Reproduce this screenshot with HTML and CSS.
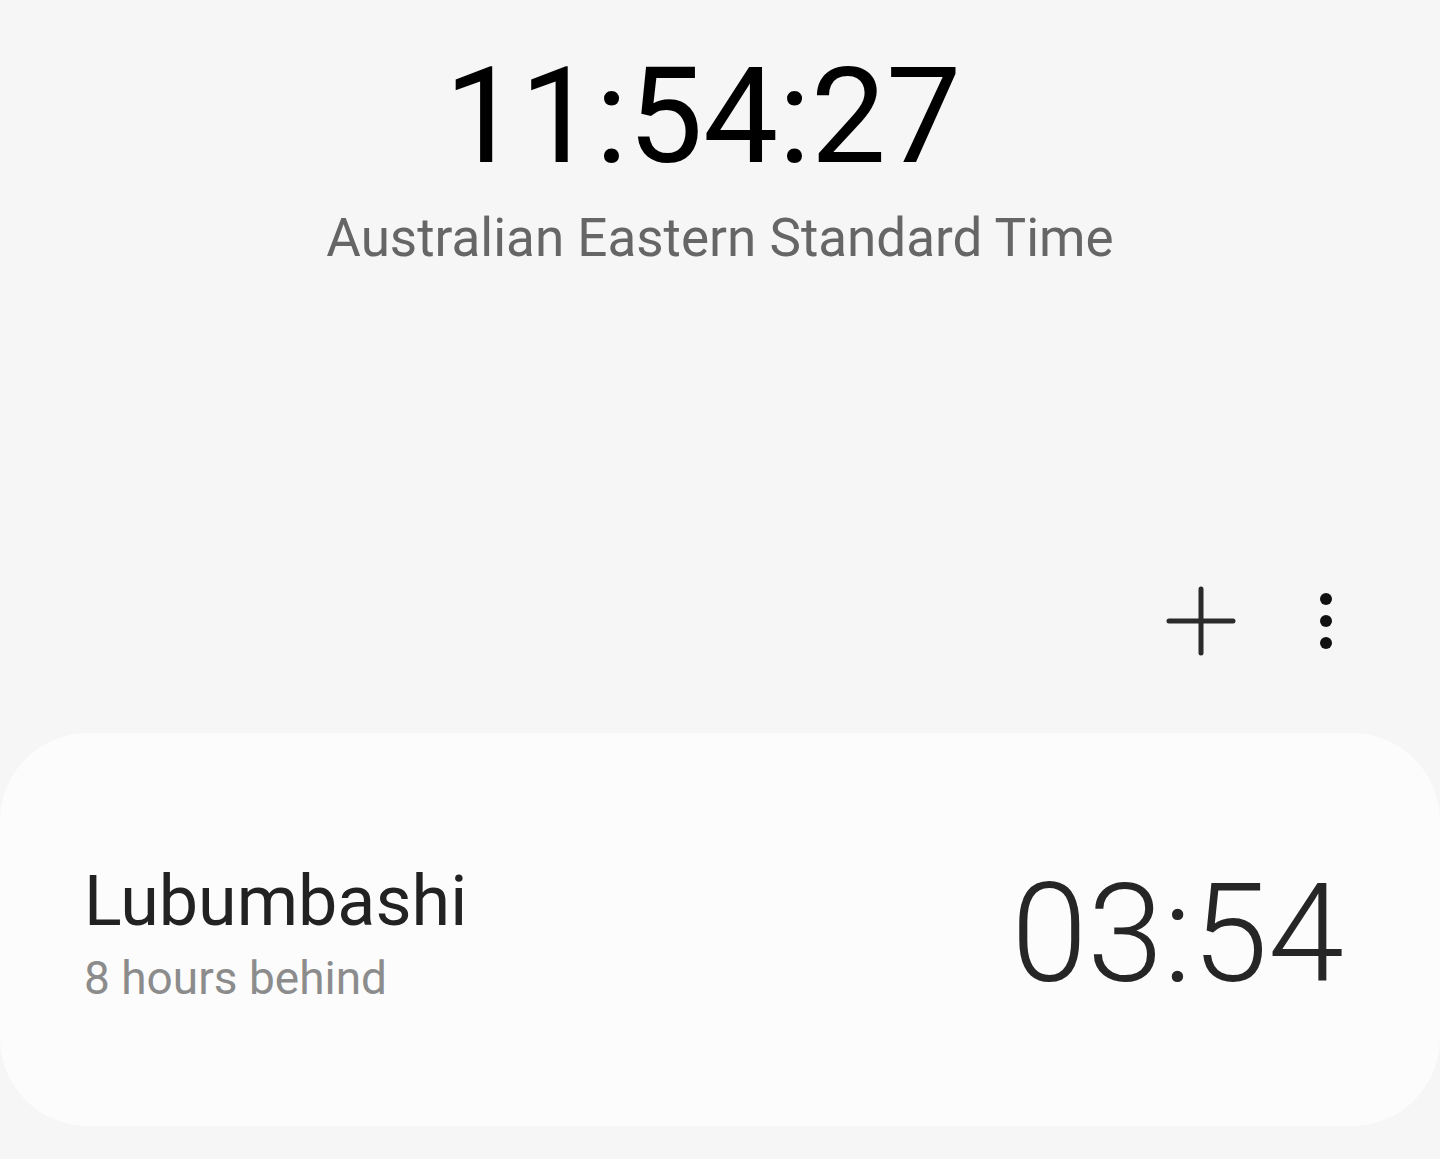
FILE: index.html
```html
<!DOCTYPE html>
<html lang="en">
<head>
<meta charset="utf-8">
<title>World clock</title>
<link rel="stylesheet" href="styles.css">
</head>
<body>
<div class="screen">
  <header class="local">
    <div class="local-time">11:54:27</div>
    <div class="local-zone">Australian Eastern Standard Time</div>
  </header>
  <div class="toolbar">
    <button class="icon-btn add" aria-label="Add city">
      <svg width="70" height="70" viewBox="0 0 70 70"><path d="M35 3 V67 M3 35 H67" stroke="#2b2b2b" stroke-width="5" stroke-linecap="round" fill="none"/></svg>
    </button>
    <button class="icon-btn more" aria-label="More options">
      <svg width="20" height="60" viewBox="0 0 20 60"><circle cx="10" cy="8" r="6" fill="#111"/><circle cx="10" cy="30" r="6" fill="#111"/><circle cx="10" cy="52" r="6" fill="#111"/></svg>
    </button>
  </div>
  <section class="card">
    <div class="city">
      <div class="city-name">Lubumbashi</div>
      <div class="city-diff">8 hours behind</div>
    </div>
    <div class="city-time">03:54</div>
  </section>
</div>
</body>
</html>
```
FILE: styles.css
```css
html, body {
  margin: 0;
  padding: 0;
  background: #f6f6f6;
  font-family: Roboto, "Noto Sans", "Liberation Sans", sans-serif;
}
.screen {
  display: flex;
  flex-direction: column;
  height: 1159px;
  overflow: hidden;
}
.local {
  display: flex;
  flex-direction: column;
  align-items: center;
  padding-top: 50px;
}
.local-time {
  font-size: 134px;
  line-height: 1;
  color: #000;
  font-weight: 400;
  margin-right: 34px;
}
.local-zone {
  margin-top: 28px;
  font-size: 53px;
  line-height: 1;
  color: #666;
}
.toolbar {
  display: flex;
  justify-content: flex-end;
  align-items: center;
  gap: 80px;
  margin-top: 321px;
  padding-right: 104px;
  height: 70px;
}
.icon-btn {
  border: 0;
  padding: 0;
  background: none;
  display: flex;
}
.card {
  margin-top: 77px;
  height: 393px;
  background: #fcfcfc;
  border-radius: 88px;
  display: flex;
  align-items: center;
  justify-content: space-between;
  padding: 0 96px 0 84px;
  box-sizing: border-box;
}
.city {
  display: flex;
  flex-direction: column;
  padding-top: 8px;
}
.city-name {
  font-size: 70px;
  line-height: 1;
  color: #222;
}
.city-diff {
  margin-top: 19px;
  font-size: 46px;
  line-height: 1;
  color: #8c8c8c;
}
.city-time {
  font-size: 137px;
  line-height: 1;
  font-weight: 300;
  color: #262626;
  padding-top: 10px;
}
```
